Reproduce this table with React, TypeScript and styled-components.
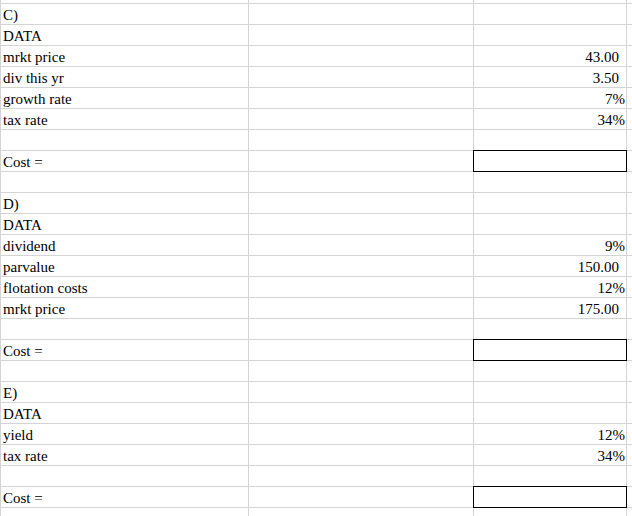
import React from 'react';
import styled, { createGlobalStyle } from 'styled-components';

const GlobalStyle = createGlobalStyle`
  html, body {
    margin: 0;
    padding: 0;
    background: #ffffff;
    overflow: hidden;
  }
`

const Sheet = styled.div`
  display: grid;
  grid-template-columns: 247px 224px 152px 1fr;
  grid-template-rows: 3px repeat(24, 20px) 8px;
  gap: 1px;
  padding-left: 1px;
  width: 632px;
  height: 516px;
  box-sizing: border-box;
  overflow: hidden;
  background: #d4d4d4;
  font-family: "Liberation Serif", "Times New Roman", serif;
  font-size: 15px;
  color: #000;
`

const Cell = styled.div<{ $align?: 'left' | 'right', $pad?: number }>`
  background: #ffffff;
  box-sizing: border-box;
  height: 100%;
  padding: 1px ${({ $pad }) => $pad ?? 0}px 0 ${({ $align }) => $align === 'right' ? 0 : 2}px;
  line-height: 20px;
  white-space: nowrap;
  overflow: hidden;
  text-align: ${({ $align }) => $align ?? 'left'};
`

const BoxCell = styled.div`
  background: #ffffff;
  margin: -1px;
  border: 1px solid #000000;
  position: relative;
  z-index: 1;
`

type Kind = 'num' | 'pct'

interface Row {
  label?: string
  value?: string
  kind?: Kind
  box?: boolean
}

const rows: Row[] = [
  { label: 'C)' },
  { label: 'DATA' },
  { label: 'mrkt price', value: '43.00', kind: 'num' },
  { label: 'div this yr', value: '3.50', kind: 'num' },
  { label: 'growth rate', value: '7%', kind: 'pct' },
  { label: 'tax rate', value: '34%', kind: 'pct' },
  {},
  { label: 'Cost =', box: true },
  {},
  { label: 'D)' },
  { label: 'DATA' },
  { label: 'dividend', value: '9%', kind: 'pct' },
  { label: 'parvalue', value: '150.00', kind: 'num' },
  { label: 'flotation costs', value: '12%', kind: 'pct' },
  { label: 'mrkt price', value: '175.00', kind: 'num' },
  {},
  { label: 'Cost =', box: true },
  {},
  { label: 'E)' },
  { label: 'DATA' },
  { label: 'yield', value: '12%', kind: 'pct' },
  { label: 'tax rate', value: '34%', kind: 'pct' },
  {},
  { label: 'Cost =', box: true },
]

const blankRow = (key: string) => (
  <React.Fragment key={key}>
    <Cell />
    <Cell />
    <Cell />
    <Cell />
  </React.Fragment>
)

export default function App() {
  return (
    <>
      <GlobalStyle />
      <Sheet>
        {blankRow('top')}
        {rows.map((r, i) => (
          <React.Fragment key={i}>
            <Cell>{r.label}</Cell>
            <Cell />
            {r.box
              ? <BoxCell />
              : <Cell $align="right" $pad={r.kind === 'num' ? 7 : 1}>{r.value}</Cell>}
            <Cell />
          </React.Fragment>
        ))}
        {blankRow('bottom')}
      </Sheet>
    </>
  )
}
